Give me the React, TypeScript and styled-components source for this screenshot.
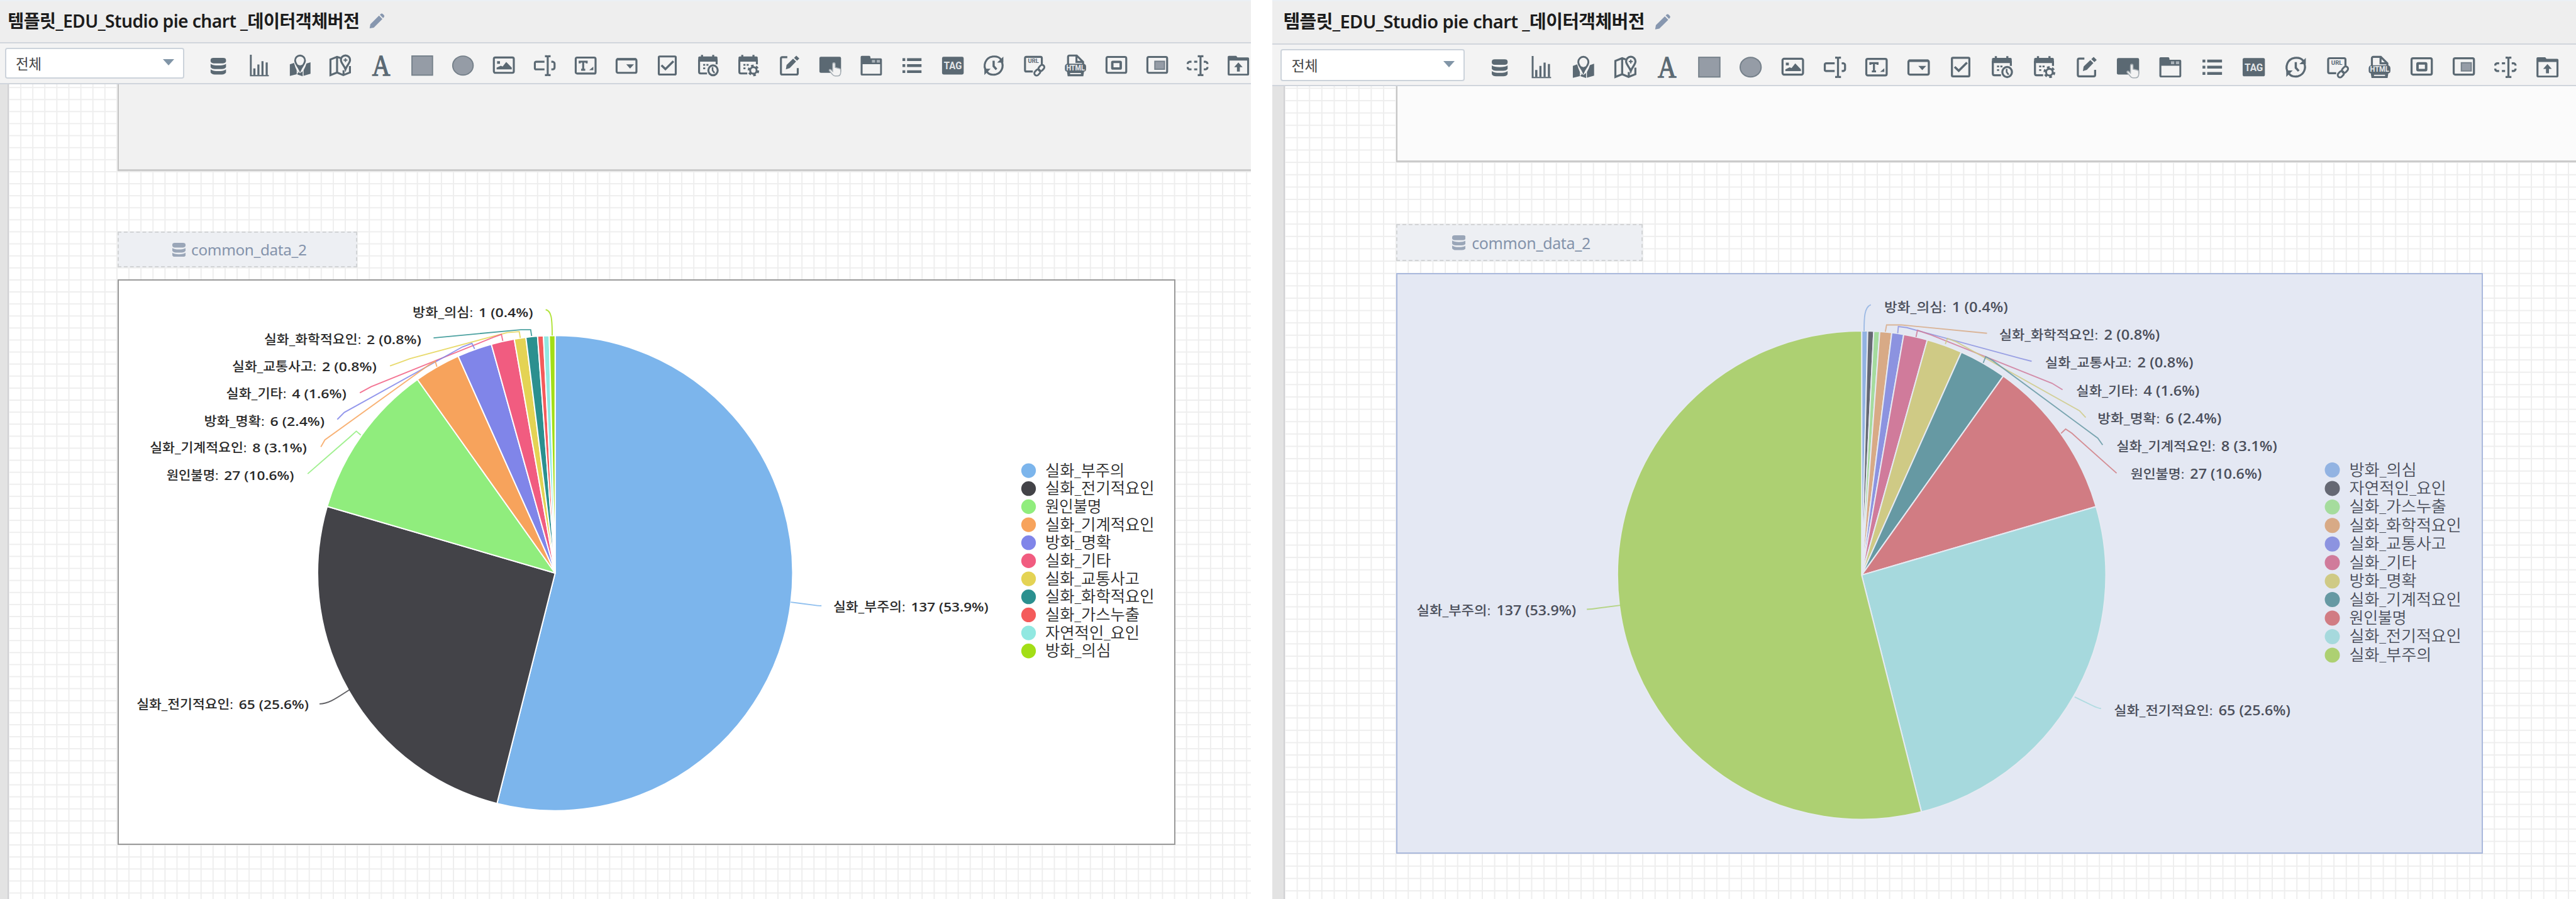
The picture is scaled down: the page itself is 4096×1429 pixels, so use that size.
import React from "react";
import styled, { createGlobalStyle, ThemeProvider } from "styled-components";

/* Each pane shows the same studio at its own magnification: theme.k is
   the number of device pixels per studio pixel. */
type PaneTheme = { k: number; inset: number; scroll: number };
const px = (n: number) => (p: any) => `${(n * (p.theme as PaneTheme).k).toFixed(3)}px`;

const UI_FONT = `"Noto Sans", "Noto Sans CJK KR", sans-serif`;
const INK = "#5b6973";
const SOFT = "#959ca6";

const GlobalStyle = createGlobalStyle`
  * { box-sizing: border-box; }
  html, body { margin: 0; padding: 0; background: #fff; }
  body { width: 4096px; height: 1429px; overflow: hidden; font-family: ${UI_FONT}; }
`;

const Screen = styled.div`
  display: flex;
  justify-content: space-between;
  width: 4096px;
  height: 1429px;
  background: #fff;
`;

const Pane = styled.section<{ $width: number }>`
  display: flex;
  flex-direction: column;
  flex: none;
  width: ${(p) => p.$width}px;
  height: 1429px;
  overflow: hidden;
`;

const TitleBar = styled.header`
  display: flex;
  align-items: center;
  flex: none;
  height: ${px(36.2)};
  padding: 0 0 ${px(1.3)} ${(p: any) => px(6.4 + p.theme.inset)(p)};
  background: #eeeeee;
  border-top: 2px solid #ebf0f5;
  border-bottom: 2px solid #d1d6dc;
`;

const Title = styled.h1`
  margin: 0;
  font-size: ${px(14.8)};
  line-height: ${px(22)};
  font-weight: 600;
  color: #1c1c1c;
  white-space: nowrap;
  letter-spacing: ${px(-0.31)};
`;

const PencilIcon = styled.svg`
  width: ${px(13)};
  height: ${px(13)};
  margin-left: ${px(8.3)};
`;

const Toolbar = styled.nav`
  display: flex;
  align-items: center;
  flex: none;
  height: ${px(33.8)};
  padding-left: ${(p: any) => px(4 + p.theme.inset)(p)};
  background: #f3f3f3;
  border-bottom: 2px solid #d0d5dc;
`;

const Select = styled.div`
  display: flex;
  align-items: center;
  justify-content: space-between;
  flex: none;
  width: ${px(149.3)};
  height: ${px(26)};
  padding: 0 ${px(7.2)} ${px(0)} ${px(8)};
  background: #fff;
  border: 2px solid #ccd3db;
  border-radius: ${px(2)};
  font-size: ${px(11.7)};
  color: #444;
`;

const Caret = styled.span`
  width: 0;
  height: 0;
  margin-top: ${px(-1.5)};
  border-left: ${px(5)} solid transparent;
  border-right: ${px(5)} solid transparent;
  border-top: ${px(5.5)} solid #8195a7;
`;

const Tools = styled.div`
  display: flex;
  flex: none;
  gap: ${px(13.95)};
  margin: ${px(3.6)} 0 0 ${px(18.1)};
`;

const ToolIcon = styled.svg`
  display: block;
  flex: none;
  width: ${px(20)};
  height: ${px(20)};
  overflow: visible;
`;

const Workspace = styled.div`
  display: flex;
  flex: 1;
  min-height: 0;
`;

const Ruler = styled.div`
  flex: none;
  width: ${(p: any) => px(7.5 + p.theme.inset)(p)};
  background: #e3e3e3;
  border-right: 2px solid #d0d0d3;
`;

const Canvas = styled.main`
  display: flex;
  flex-direction: column;
  align-items: flex-start;
  flex: 1;
  min-width: 0;
  padding-left: ${px(90.3)};
  background-color: #fff;
  background-image:
    linear-gradient(to right, #eeeeee 2px, transparent 2px),
    linear-gradient(to bottom, #eeeeee 2px, transparent 2px);
  background-size: ${px(10)} ${px(10)};
  background-position: ${(p: any) => `-1px ${(2.2 - p.theme.scroll) * p.theme.k}px`};
`;

const UpperBox = styled.div<{ $fill: string }>`
  flex: none;
  align-self: stretch;
  height: ${(p: any) => px(72.3 - p.theme.scroll)(p)};
  background: ${(p) => p.$fill};
  border-left: 2px solid #c4c4c4;
  border-bottom: 3px solid #cbcbcb;
`;

const DataObject = styled.div`
  display: flex;
  align-items: center;
  justify-content: center;
  flex: none;
  gap: ${px(5)};
  width: ${px(199.5)};
  height: ${px(29.8)};
  margin-top: ${px(50.2)};
  padding-left: ${px(3)};
  background: #edeff3;
  border: 2px dashed #d2d4d6;
  font-size: ${px(12.7)};
  letter-spacing: ${px(-0.17)};
  color: #8493ab;
`;

const DataIcon = styled.svg`
  width: ${px(11)};
  height: ${px(12)};
  margin-top: ${px(0.5)};
`;

const ChartFrame = styled.figure<{ $fill: string; $line: string }>`
  flex: none;
  width: ${px(879.6)};
  height: ${px(470)};
  margin: ${px(9.9)} 0 0;
  background: ${(p) => p.$fill};
  box-shadow: inset 0 0 0 2px ${(p) => p.$line};
`;

const ChartSvg = styled.svg`
  display: block;
  width: 100%;
  height: 100%;
`;

const ChartText = styled.text<{ $size: number; $weight: number }>`
  font-family: "Open Sans", "Noto Sans CJK KR", sans-serif;
  font-size: ${(p) => p.$size}px;
  font-weight: ${(p) => p.$weight};
`;

/* ---------- toolbar icons, on a 20 x 20 grid ---------- */

const line = { fill: "none", stroke: INK, strokeWidth: 1.65 } as const;

const Database = ({ color = INK }: { color?: string }) => (
  <g fill={color}>
    <path d="M3.6 5.4Q3.7 3.7 6 3.7H14Q16.3 3.7 16.4 5.4V6.6Q16 8.1 14 8.2H6Q4 8.1 3.6 6.6Z" />
    <path d="M3.6 8.6Q5.5 10 10 10Q14.5 10 16.4 8.6V11.4Q15.5 12.9 13 13H7Q4.5 12.9 3.6 11.4Z" />
    <path d="M3.6 13.2Q5.5 14.7 10 14.7Q14.5 14.7 16.4 13.2V15.8Q15.5 17.4 13 17.5H7Q4.5 17.4 3.6 15.8Z" />
  </g>
);

const CalendarBase = () => (
  <g>
    <path d="M2.4 5V15.3Q2.4 16.6 3.7 16.6H9M17 5V9" {...line} />
    <path d="M1.7 6.8V3.4Q1.7 2.5 2.8 2.5H4V1.2H5.7V2.5H13.3V1.2H15V2.5H16.6Q17.7 2.5 17.7 3.4V6.8Z" fill={INK} />
    <path d="M5.8 9.500H10.800M5.800 12.400H7.800" stroke={INK} strokeWidth="1.400" strokeDasharray="1.700 1" fill="none" />
  </g>
);

const Beam = () => (
  <path
    d="M10.200 2.300H11.600Q12.500 2.300 12.500 3.300V17Q12.500 18 11.600 18H10.200M14.900 2.300H13.400Q12.500 2.300 12.500 3.300M12.500 17Q12.500 18 13.400 18H14.900"
    {...line}
  />
);

const ICONS: React.ReactNode[] = [
  <Database />,
  <g fill={INK}>
    <path d="M2.300 1H3.800V17.900H18V19H2.300Z" />
    <path d="M5.100 12.400H6.900V18H5.100ZM8.500 9.100H10.200V18H8.500ZM11.900 6.400H13.600V18H11.900ZM15.400 7.500H17.100V18H15.400Z" />
  </g>,
  <g>
    <path d="M1.500 9L5 7.800Q6 11.500 7.200 14V17.300L1.500 18.700Z" fill={INK} />
    <path d="M7.800 14.800L10 16.400L12.200 14.800V18.900L7.800 17.500Z" fill={INK} />
    <path d="M18.700 7.300V16.900L12.900 18.600V14Q14.500 11.300 15.300 8.400Z" fill={INK} />
    <path
      d="M10 1.700A4.100 4.100 0 0 0 5.900 5.800C5.900 8.600 8.300 10.200 10 14.200C11.700 10.200 14.100 8.600 14.100 5.800A4.100 4.100 0 0 0 10 1.700Z"
      fill="#f3f3f3"
      stroke={INK}
      strokeWidth="1.500"
    />
    <path d="M7.200 9L10 10L12.800 9L10 14.200Z" fill={INK} />
    <circle cx="8" cy="15.800" r=".6" fill="#f3f3f3" />
  </g>,
  <g {...line}>
    <path d="M10.200 3.800L7.300 2.800L1.800 5V18L7.300 15.800L12.500 18L18 15.800V10.500M7.300 3V15.800M12.700 14V18" />
    <path
      d="M14.300 1.600A3.800 3.800 0 0 0 10.500 5.400C10.500 8 13 9.500 14.300 13.200C15.600 9.500 18.100 8 18.100 5.400A3.800 3.800 0 0 0 14.300 1.600Z"
      fill="#f3f3f3"
    />
    <path d="M14.300 3.900V7.100M12.700 5.500H15.900" strokeWidth="1" />
  </g>,
  <text
    x="10"
    y="18.300"
    textAnchor="middle"
    fontFamily="Liberation Serif, serif"
    fontSize="24.500"
    textLength="15"
    lengthAdjust="spacingAndGlyphs"
    stroke={INK}
    strokeWidth=".7"
    fill={INK}
  >
    A
  </text>,
  <rect x="1.600" y="2.100" width="17.100" height="15.900" fill={SOFT} stroke="#75808a" />,
  <ellipse cx="10" cy="10.050" rx="8.500" ry="7.900" fill={SOFT} stroke="#75808a" />,
  <g>
    <rect x="1.700" y="3.300" width="16.600" height="12.800" rx="1.300" {...line} />
    <rect x="4.400" y="6.400" width="2.400" height="2.200" fill={INK} />
    <path d="M4 13.200V11.800L7.500 10.200L9 10.800L12 7L16.600 11.800V13.200Z" fill={INK} />
  </g>,
  <g>
    <path
      d="M9.800 6.900H3Q1.800 6.900 1.800 8V12.100Q1.800 13.200 3 13.200H9.800M15.500 6.900H16.800Q18.200 7.300 18.200 8.500V11.600Q18.200 12.800 16.800 13.200H15.500"
      {...line}
    />
    <Beam />
  </g>,
  <g>
    <rect x="1.800" y="3.400" width="16.500" height="13.300" rx="1.200" {...line} />
    <path d="M5.100 8.200V6.800H10.900V8.200M8 6.800V13.500M6.300 13.500H9.700" {...line} />
    <path d="M16.400 11V13.900H13Z" fill={INK} />
  </g>,
  <g>
    <rect x="1.800" y="4.800" width="16.500" height="11.300" rx="1.200" {...line} />
    <path d="M2 4.800H18" stroke={INK} strokeWidth="2" />
    <path d="M9.800 9H16.200L13 12.500Z" fill={INK} />
  </g>,
  <g>
    <rect x="2.900" y="2.500" width="14.100" height="15" rx=".8" {...line} />
    <path d="M5.100 9.800L8.400 13L15.100 6.400" {...line} strokeWidth="1.800" />
  </g>,
  <g>
    <CalendarBase />
    <ellipse cx="14" cy="14" rx="3.900" ry="4.100" {...line} fill="#f3f3f3" />
    <path d="M13.600 11.400V14L15.200 16.200" {...line} strokeWidth="1.300" />
  </g>,
  <g>
    <CalendarBase />
    <circle cx="14.100" cy="14.100" r="3.900" fill="none" stroke={INK} strokeWidth="1.800" strokeDasharray="2.150 1.934" />
    <circle cx="14.100" cy="14.100" r="2.700" fill="#f3f3f3" stroke={INK} strokeWidth="1.600" />
  </g>,
  <g>
    <path d="M8.300 3.100H4.200Q3 3.100 3 4.200V16.300Q3 17.500 4.200 17.500H15.800Q17 17.500 17 16.300V12.200" {...line} />
    <path d="M7.100 13.200L7.700 9.600L13.100 4.300L15.600 6.700L10.300 12.200ZM13.900 3.600L15.800 1.800L18.300 4.200L16.400 6Z" fill={INK} />
  </g>,
  <g>
    <rect x="1" y="2.700" width="18" height="13.400" rx="1.200" fill={INK} />
    <path
      d="M12 14.800V9Q12 7.700 13 7.700Q14.100 7.700 14.100 9V11.600L17.700 12.500Q18.900 12.900 18.700 14.500V16Q18.500 18.700 16 18.700H14Q12.800 18.700 12 17.600L9.200 14.200Q9 13 10.300 13.300Z"
      fill="#f3f3f3"
      stroke="#a5adb3"
      strokeWidth=".8"
    />
  </g>,
  <g>
    <path
      d="M1.300 3Q1.300 2 2.300 2H8.500Q9.500 2 9.500 4.100H18Q19 4.100 19 5.100V17.200Q19 18.300 18 18.300H2.300Q1.300 18.300 1.300 17.200ZM2.900 8.900V16.900H17.500V8.900Z"
      fill={INK}
      fillRule="evenodd"
    />
    <path d="M10.700 5.400H13.300V7.600H10.700ZM14.700 5.400H17.300V7.600H14.700Z" fill="#aab2b8" />
  </g>,
  <path
    d="M2.100 5.100H4.400M5.900 5.100H17.900M2.100 10.100H4.400M5.900 10.100H17.900M2.100 15.100H4.400M5.900 15.100H17.900"
    stroke={INK}
    strokeWidth="2.300"
  />,
  <g>
    <rect x="1" y="2.700" width="18" height="14.800" rx="1.300" fill={INK} />
    <text
      x="10"
      y="13.200"
      textAnchor="middle"
      fontFamily="Roboto, sans-serif"
      fontWeight="700"
      fontSize="8.500"
      textLength="15"
      lengthAdjust="spacingAndGlyphs"
      fill="#e3e6e8"
    >
      TAG
    </text>
  </g>,
  <g>
    <path d="M4 14.800A7.400 7.600 0 0 1 9 2.600M8.500 2.600Q14 1.900 16 5M16.600 6.700A7.400 7.600 0 0 1 11.800 17.400M12 17.400Q6 18.500 4.200 14.800" {...line} />
    <path d="M18 2.600V7.600H12.800ZM2.200 17.900V12.700H7.400Z" fill={INK} />
    <path d="M9.900 6V10.600L12.300 13.200" {...line} strokeWidth="1.800" />
  </g>,
  <g>
    <path d="M16 9V4Q16 2.800 14.900 2.800H3.200Q2 2.800 2 4V13.800Q2 15 3.200 15H8.500" {...line} />
    <text
      x="9"
      y="7.900"
      textAnchor="middle"
      fontFamily="Roboto, sans-serif"
      fontWeight="700"
      fontSize="4.300"
      fill={INK}
      textLength="9"
      lengthAdjust="spacingAndGlyphs"
    >
      URL
    </text>
    <g transform="rotate(-48 14 14)" {...line} strokeWidth="1.500">
      <rect x="8.700" y="12" width="5.600" height="3.800" rx="1.900" />
      <rect x="13.700" y="12" width="5.600" height="3.800" rx="1.900" />
    </g>
  </g>,
  <g>
    <path d="M3.800 8.900V3Q3.800 1.700 5 1.700H11L16.300 7V9M10.800 2V7H15.500" {...line} />
    <path
      d="M3 8.500H17Q18.800 9 18.800 11V13Q18.800 14.800 17.400 15H2.600Q1.200 14.800 1.200 13V11Q1.200 9 3 8.500ZM2.800 14.500H17.200L16.500 18.900H3.500Z"
      fill={INK}
    />
    <path d="M5.500 16.700H14.500" stroke="#f3f3f3" strokeWidth="1" />
    <text
      x="10"
      y="13.900"
      textAnchor="middle"
      fontFamily="Roboto, sans-serif"
      fontWeight="700"
      fontSize="6.600"
      textLength="15.400"
      lengthAdjust="spacingAndGlyphs"
      fill="#e8eaec"
    >
      HTML
    </text>
  </g>,
  <g>
    <rect x="1.800" y="2.900" width="16.400" height="13.200" rx="1.200" {...line} />
    <rect x="6.600" y="7" width="7" height="5.500" rx=".5" {...line} strokeWidth="2" />
  </g>,
  <g>
    <rect x="1.800" y="2.900" width="16.400" height="13.200" rx="1.200" {...line} />
    <rect x="8" y="6.500" width="8" height="6.600" fill={SOFT} stroke="#75808a" />
  </g>,
  <g>
    <path
      d="M9.800 6.900H7.200M5 6.900H3.200Q1.800 7.200 1.800 8.800M1.800 11.200Q1.800 12.900 3.200 13.200H5M7.200 13.200H9.800M15.200 6.900H16.800Q18.300 7.300 18.300 8.800M18.300 11.200Q18.300 12.800 16.800 13.200H15.200"
      {...line}
    />
    <Beam />
  </g>,
  <g>
    <path
      d="M1.100 3Q1.100 2 2.100 2H8.200L9.200 3.300H17.900Q18.900 3.300 18.900 4.300V17.200Q18.900 18.300 17.900 18.300H2.100Q1.100 18.300 1.100 17.200ZM2.700 5.900V16.900H17.300V5.900Z"
      fill={INK}
      fillRule="evenodd"
    />
    <path d="M10 7.500L13.500 11.400H11.200V15H8.800V11.400H6.500Z" fill={INK} />
  </g>,
];

/* ---------- chart data ---------- */

type Slice = { name: string; value: number; color: string };
type Label = { name: string; figures: string; from: number; to: number; y: number };
type Legend = { cx: number; r: number; x: number; y: number; step: number; ends: number[]; size: number };
type Chart = {
  viewBox: string;
  cx: number;
  cy: number;
  r: number;
  gap: string;
  ink: string;
  unit: number;
  slices: Slice[];
  labels: Label[];
  links: [string, string][];
  legend: Legend;
};

const CHART_A: Chart = {
  viewBox: "218.7 519.6 1966 1050.5",
  cx: 1032,
  cy: 1065.5,
  r: 441.5,
  gap: "#ffffff",
  ink: "#2a2a2a",
  unit: 2.235,
  slices: [
    { name: "실화_부주의", value: 137, color: "#7cb5ec" },
    { name: "실화_전기적요인", value: 65, color: "#434348" },
    { name: "원인불명", value: 27, color: "#90ed7d" },
    { name: "실화_기계적요인", value: 8, color: "#f7a35c" },
    { name: "방화_명확", value: 6, color: "#8085e9" },
    { name: "실화_기타", value: 4, color: "#f15c80" },
    { name: "실화_교통사고", value: 2, color: "#e4d354" },
    { name: "실화_화학적요인", value: 2, color: "#2b908f" },
    { name: "실화_가스누출", value: 1, color: "#f45b5b" },
    { name: "자연적인_요인", value: 1, color: "#91e8e1" },
    { name: "방화_의심", value: 1, color: "#a3de16" },
  ],
  labels: [
    { name: "방화_의심:", figures: "1 (0.4%)", from: 767, to: 991, y: 581.5 },
    { name: "실화_화학적요인:", figures: "2 (0.8%)", from: 491, to: 783, y: 632 },
    { name: "실화_교통사고:", figures: "2 (0.8%)", from: 431.5, to: 700, y: 682 },
    { name: "실화_기타:", figures: "4 (1.6%)", from: 420.5, to: 644, y: 732.5 },
    { name: "방화_명확:", figures: "6 (2.4%)", from: 379.5, to: 603.5, y: 783 },
    { name: "실화_기계적요인:", figures: "8 (3.1%)", from: 278.5, to: 570.5, y: 833 },
    { name: "원인불명:", figures: "27 (10.6%)", from: 309.5, to: 546.5, y: 883.5 },
    { name: "실화_전기적요인:", figures: "65 (25.6%)", from: 254, to: 574, y: 1309.5 },
    { name: "실화_부주의:", figures: "137 (53.9%)", from: 1549, to: 1837.5, y: 1128.5 },
  ],
  links: [
    ["#a3de16", "M1026.500 624C1026.500 592 1025 578 1014.400 576"],
    ["#2b908f", "M988.300 625L986.500 613.200H968L806 628.500"],
    ["#e4d354", "M967.200 628.500L965.300 616.800L943 618.500L762 667L743 674L725 680.500"],
    ["#f15c80", "M934.700 634L932.100 622L918 627L690 719L669 730.500"],
    ["#8085e9", "M882.400 649L877.300 638.600L860 645L640 767L627 780"],
    ["#f7a35c", "M812.200 682L809 671.400L797 679L604 818L596.500 831"],
    ["#90ed7d", "M670.700 809L662.400 801.800L650 813L572 881"],
    ["#434348", "M650 1282C625 1298 612 1308 594 1308.500"],
    ["#7cb5ec", "M1469.900 1119.500L1513 1125Q1522 1126.500 1527 1126"],
  ],
  legend: {
    cx: 1912,
    r: 13.6,
    x: 1943,
    y: 875,
    step: 33.52,
    ends: [2090.5, 2146, 2047.5, 2146, 2065, 2065, 2118.5, 2146, 2118.5, 2118.5, 2065],
    size: 29,
  },
};

const CHART_B: Chart = {
  viewBox: "2595.5 508 2020 1079.5",
  cx: 3461,
  cy: 1069.5,
  r: 454,
  gap: "#e6eaf2",
  ink: "#4b4f5b",
  unit: 2.296,
  slices: [
    { name: "방화_의심", value: 1, color: "#92b3e2" },
    { name: "자연적인_요인", value: 1, color: "#656873" },
    { name: "실화_가스누출", value: 1, color: "#a5dc9d" },
    { name: "실화_화학적요인", value: 2, color: "#d8aa86" },
    { name: "실화_교통사고", value: 2, color: "#8c93e0" },
    { name: "실화_기타", value: 4, color: "#d07b9b" },
    { name: "방화_명확", value: 6, color: "#cfca85" },
    { name: "실화_기계적요인", value: 8, color: "#6699a3" },
    { name: "원인불명", value: 27, color: "#d17c83" },
    { name: "실화_전기적요인", value: 65, color: "#a6d9dd" },
    { name: "실화_부주의", value: 137, color: "#add072" },
  ],
  labels: [
    { name: "방화_의심:", figures: "1 (0.4%)", from: 3503, to: 3733, y: 571.5 },
    { name: "실화_화학적요인:", figures: "2 (0.8%)", from: 3716.5, to: 4015.5, y: 623 },
    { name: "실화_교통사고:", figures: "2 (0.8%)", from: 3802, to: 4077.5, y: 675 },
    { name: "실화_기타:", figures: "4 (1.6%)", from: 3859.5, to: 4089, y: 727 },
    { name: "방화_명확:", figures: "6 (2.4%)", from: 3899.5, to: 4130, y: 779 },
    { name: "실화_기계적요인:", figures: "8 (3.1%)", from: 3934.5, to: 4233.5, y: 830.5 },
    { name: "원인불명:", figures: "27 (10.6%)", from: 3961, to: 4205, y: 882 },
    { name: "실화_전기적요인:", figures: "65 (25.6%)", from: 3930, to: 4258, y: 1321 },
    { name: "실화_부주의:", figures: "137 (53.9%)", from: 2633.5, to: 2930, y: 1135 },
  ],
  links: [
    ["#92b3e2", "M3465.500 616C3465.500 590 3466 572 3478 567"],
    ["#d8aa86", "M3505 617L3507.300 604.500H3535L3694 620"],
    ["#8c93e0", "M3528 620L3529.200 607.500L3545 609.500L3757 667L3777 672"],
    ["#d07b9b", "M3562 627L3564.700 614.500L3590 623L3815 713L3834.500 725"],
    ["#cfca85", "M3616.500 640L3620.400 629.500L3637 636L3866 764L3877.500 776.500"],
    ["#6699a3", "M3687 675L3691.600 663.500L3705 671L3900 815L3909 827.500"],
    ["#d17c83", "M3831.700 806L3840.200 798L3852 806L3935 880"],
    ["#a6d9dd", "M3857 1296L3890 1312Q3900 1317 3906 1317.500"],
    ["#add072", "M3017 1125L2970 1131Q2960 1133 2950 1133"],
  ],
  legend: {
    cx: 4336,
    r: 14,
    x: 4367.5,
    y: 874,
    step: 34.43,
    ends: [4493, 4548, 4548, 4576, 4548, 4493, 4493, 4576, 4474, 4576, 4520.5],
    size: 29.8,
  },
};

const wedge = (c: Chart, start: number, end: number) => {
  const total = c.slices.reduce((sum, s) => sum + s.value, 0);
  const point = (v: number) => {
    const a = (v / total) * 2 * Math.PI;
    return `${c.cx + c.r * Math.sin(a)} ${c.cy - c.r * Math.cos(a)}`;
  };
  const large = (end - start) / total > 0.5 ? 1 : 0;
  return `M${c.cx} ${c.cy}L${point(start)}A${c.r} ${c.r} 0 ${large} 1 ${point(end)}Z`;
};

const SliceLabel = ({ label, chart }: { label: Label; chart: Chart }) => {
  const { unit, ink } = chart;
  const figuresWidth = (45.3 + (label.figures.length - 8) * 6.4) * unit;
  const nameWidth = label.to - label.from - figuresWidth - 4.6 * unit;
  return (
    <g fill={ink}>
      <ChartText
        $size={10.6 * unit}
        $weight={500}
        x={label.from}
        y={label.y + 3.8 * unit}
        textLength={nameWidth}
        lengthAdjust="spacingAndGlyphs"
      >
        {label.name}
      </ChartText>
      <ChartText
        $size={10.8 * unit}
        $weight={600}
        x={label.to - figuresWidth}
        y={label.y + 3.8 * unit}
        textLength={figuresWidth}
        lengthAdjust="spacingAndGlyphs"
      >
        {label.figures}
      </ChartText>
    </g>
  );
};

const PieChart = ({ chart }: { chart: Chart }) => {
  let run = 0;
  const { legend } = chart;
  return (
    <ChartSvg viewBox={chart.viewBox} preserveAspectRatio="none">
      {chart.slices.map((s) => {
        const d = wedge(chart, run, run + s.value);
        run += s.value;
        return <path key={s.name} d={d} fill={s.color} stroke={chart.gap} strokeWidth="2.300" strokeLinejoin="round" />;
      })}
      {chart.links.map(([color, d]) => (
        <path key={d} d={d} fill="none" stroke={color} strokeWidth="2.200" strokeOpacity=".85" />
      ))}
      {chart.labels.map((l) => (
        <SliceLabel key={l.name} label={l} chart={chart} />
      ))}
      {chart.slices.map((s, i) => (
        <g key={s.name}>
          <circle cx={legend.cx} cy={legend.y + i * legend.step} r={legend.r} fill={s.color} />
          <ChartText
            $size={legend.size}
            $weight={350}
            x={legend.x}
            y={legend.y + i * legend.step + 10}
            textLength={legend.ends[i] - legend.x}
            lengthAdjust="spacingAndGlyphs"
            fill={chart.ink}
          >
            {s.name}
          </ChartText>
        </g>
      ))}
    </ChartSvg>
  );
};

type StudioProps = {
  width: number;
  theme: PaneTheme;
  boxFill: string;
  chartFill: string;
  chartLine: string;
  chart: Chart;
};

const Studio = ({ width, theme, boxFill, chartFill, chartLine, chart }: StudioProps) => (
  <ThemeProvider theme={theme}>
    <Pane $width={width}>
      <TitleBar>
        <Title>템플릿_EDU_Studio pie chart _데이터객체버전</Title>
        <PencilIcon viewBox="0 0 13 13">
          <path
            d="M.4 12.600L1 9.200L8.200 2L11 4.800L3.800 12ZM8.900 1.300L9.900.4Q10.700 0 11.500.8L12.300 1.600Q13 2.400 12.400 3.200L11.600 4.100Z"
            fill="#8797af"
          />
        </PencilIcon>
      </TitleBar>
      <Toolbar>
        <Select>
          전체
          <Caret />
        </Select>
        <Tools>
          {ICONS.map((icon, i) => (
            <ToolIcon key={i} viewBox="0 0 20 20">
              {icon}
            </ToolIcon>
          ))}
        </Tools>
      </Toolbar>
      <Workspace>
        <Ruler />
        <Canvas>
          <UpperBox $fill={boxFill} />
          <DataObject>
            <DataIcon viewBox="3.600 3.700 12.800 13.800" preserveAspectRatio="none">
              <Database color="#9aa6b8" />
            </DataIcon>
            <span>common_data_2</span>
          </DataObject>
          <ChartFrame $fill={chartFill} $line={chartLine}>
            <PieChart chart={chart} />
          </ChartFrame>
        </Canvas>
      </Workspace>
    </Pane>
  </ThemeProvider>
);

export default function App() {
  return (
    <>
      <GlobalStyle />
      <Screen>
        <Studio
          width={1989}
          theme={{ k: 1.912, inset: 0, scroll: 0 }}
          boxFill="#f1f1f1"
          chartFill="#ffffff"
          chartLine="#999999"
          chart={CHART_A}
        />
        <Studio
          width={2073}
          theme={{ k: 1.964, inset: 2.5, scroll: 11 }}
          boxFill="#fbfbfb"
          chartFill="#e4e8f3"
          chartLine="#a9b8dc"
          chart={CHART_B}
        />
      </Screen>
    </>
  );
}
